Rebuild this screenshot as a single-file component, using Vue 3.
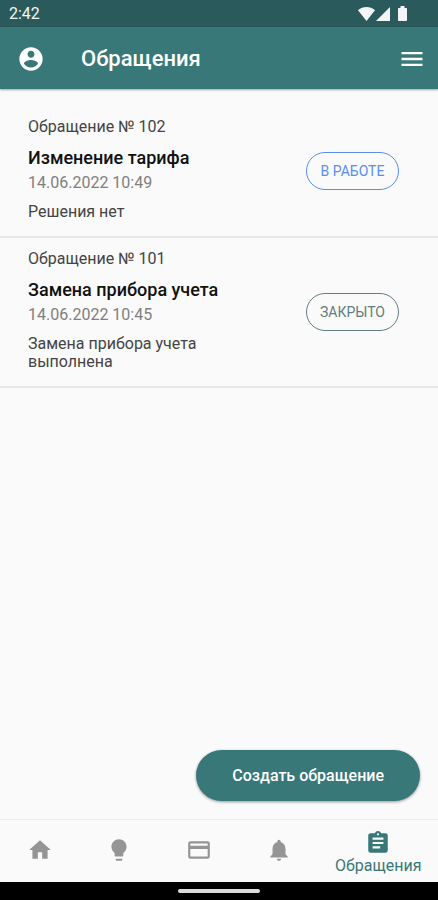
<script setup>
const tickets = [
  { id: 102, title: 'Изменение тарифа', date: '14.06.2022 10:49', result: 'Решения нет', status: 'В РАБОТЕ', kind: 'active' },
  { id: 101, title: 'Замена прибора учета', date: '14.06.2022 10:45', result: 'Замена прибора учета выполнена', status: 'ЗАКРЫТО', kind: 'closed' },
]

const tabs = [
  { name: 'Главная', path: 'M10 20v-6h4v6h5v-8h3L12 3 2 12h3v8z' },
  { name: 'Показания', path: 'M9 21c0 .55.45 1 1 1h4c.55 0 1-.45 1-1v-1H9v1zm3-19C8.14 2 5 5.14 5 9c0 2.38 1.19 4.47 3 5.74V17c0 .55.45 1 1 1h6c.55 0 1-.45 1-1v-2.26c1.81-1.27 3-3.36 3-5.74 0-3.86-3.14-7-7-7z' },
  { name: 'Оплата', path: 'M20 4H4c-1.11 0-1.99.89-1.99 2L2 18c0 1.11.89 2 2 2h16c1.11 0 2-.89 2-2V6c0-1.11-.89-2-2-2zm0 14H4v-7h16v7zm0-10H4V6h16v2z' },
  { name: 'Уведомления', path: 'M12 22c1.1 0 2-.9 2-2h-4c0 1.1.89 2 2 2zm6-6v-5c0-3.07-1.64-5.64-4.5-6.32V4c0-.83-.67-1.5-1.5-1.5s-1.5.67-1.5 1.5v.68C7.63 5.36 6 7.92 6 11v5l-2 2v1h16v-1l-2-2z' },
  { name: 'Обращения', active: true, path: 'M19 3h-4.18C14.4 1.84 13.3 1 12 1c-1.3 0-2.4.84-2.82 2H5c-1.1 0-2 .9-2 2v14c0 1.1.9 2 2 2h14c1.1 0 2-.9 2-2V5c0-1.1-.9-2-2-2zm-7 0c.55 0 1 .45 1 1s-.45 1-1 1-1-.45-1-1 .45-1 1-1zm2 14H7v-2h7v2zm3-4H7v-2h10v2zm0-4H7V7h10v2z' },
]
</script>

<template>
  <div class="screen">
    <div class="status-bar">
      <span>2:42</span>
      <svg class="status-icons" viewBox="0 0 52 16" aria-hidden="true">
        <path d="M0 4.2C5 0 12 0 17 4.2L8.500 15z" />
        <path d="M32 1v14H18z" />
        <path d="M42.500 0h4v2h1.500c.6 0 1 .4 1 1v11c0 .6-.4 1-1 1h-7c-.6 0-1-.4-1-1V3c0-.6.4-1 1-1h1.500z" />
      </svg>
    </div>

    <header class="app-bar">
      <button class="icon-button" type="button" aria-label="Профиль">
        <svg viewBox="0 0 24 24"><path d="M12 2C6.480 2 2 6.480 2 12s4.480 10 10 10 10-4.480 10-10S17.520 2 12 2zm0 3c1.660 0 3 1.340 3 3s-1.340 3-3 3-3-1.340-3-3 1.340-3 3-3zm0 14.200c-2.500 0-4.710-1.280-6-3.220.03-1.990 4-3.080 6-3.080 1.990 0 5.970 1.090 6 3.080-1.290 1.940-3.500 3.220-6 3.220z" /></svg>
      </button>
      <h1>Обращения</h1>
      <button class="icon-button" type="button" aria-label="Меню">
        <svg viewBox="0 0 24 24"><path d="M3 18h18v-2H3v2zm0-5h18v-2H3v2zm0-7v2h18V6H3z" /></svg>
      </button>
    </header>

    <main>
      <ul class="tickets">
        <li v-for="t in tickets" :key="t.id" class="ticket">
          <div class="details">
            <p class="number">Обращение № {{ t.id }}</p>
            <h2>{{ t.title }}</h2>
            <p class="date">{{ t.date }}</p>
            <p class="result">{{ t.result }}</p>
          </div>
          <span class="chip" :class="t.kind">{{ t.status }}</span>
        </li>
      </ul>
      <button class="create" type="button">Создать обращение</button>
    </main>

    <nav class="tabs">
      <a v-for="tab in tabs" :key="tab.name" href="#" class="tab" :class="{ active: tab.active }" :aria-label="tab.name">
        <svg viewBox="0 0 24 24"><path :d="tab.path" /></svg>
        <span v-if="tab.active">{{ tab.name }}</span>
      </a>
    </nav>
    <div class="system-bar"><div class="handle"></div></div>
  </div>
</template>

<style>
body {
  margin: 0;
  background: #fafafa;
}
</style>

<style scoped>
.screen {
  display: flex;
  flex-direction: column;
  min-height: 100vh;
  background: #fafafa;
  font-family: Roboto, "Liberation Sans", sans-serif;
  color: #444;
}
svg {
  display: block;
  fill: currentColor;
}
h1, h2, p, ul {
  margin: 0;
  padding: 0;
}
button {
  border: 0;
  font-family: inherit;
  cursor: pointer;
}
.status-bar {
  display: flex;
  align-items: center;
  justify-content: space-between;
  height: 27px;
  padding: 0 28px 0 9px;
  background: #2a5a5b;
  color: #f2f6f6;
  font-size: 16px;
}
.status-icons {
  width: 52px;
  height: 16px;
}
.app-bar {
  position: relative;
  box-sizing: border-box;
  display: flex;
  align-items: center;
  height: 62px;
  padding: 2px 12px 0 17px;
  background: #387879;
  color: #fff;
  box-shadow: 0 1px 2px rgba(0, 0, 0, 0.35);
}
.app-bar h1 {
  flex: 1;
  padding-left: 36px;
  font-size: 22px;
  font-weight: 500;
  line-height: 28px;
}
.icon-button {
  padding: 0;
  background: none;
  color: inherit;
}
.icon-button svg {
  width: 28px;
  height: 28px;
}
main {
  flex: 1;
  display: flex;
  flex-direction: column;
  justify-content: space-between;
  padding: 17px 0 18px;
}
.tickets {
  list-style: none;
}
.ticket {
  display: flex;
  align-items: center;
  justify-content: space-between;
  padding: 10px 39px 15px 28px;
  border-bottom: 2px solid #e6e6e6;
}
.details {
  width: 200px;
}
.number {
  font-size: 16px;
  line-height: 22px;
}
.ticket h2 {
  margin-top: 8px;
  color: #111;
  font-size: 18px;
  font-weight: 500;
  line-height: 24px;
}
.date {
  color: #808080;
  font-size: 16px;
  line-height: 26px;
}
.result {
  margin-top: 7px;
  font-size: 16px;
  line-height: 18px;
}
.chip {
  box-sizing: border-box;
  width: 93px;
  margin-top: 4px;
  border: 1px solid currentColor;
  border-radius: 19px;
  font-size: 14px;
  line-height: 36px;
  text-align: center;
}
.chip.active {
  color: #5b8def;
}
.chip.closed {
  color: #607d80;
}
.create {
  align-self: flex-end;
  height: 51px;
  margin-right: 18px;
  padding: 0 36px;
  border-radius: 26px;
  background: #387879;
  color: #fff;
  font-size: 16px;
  font-weight: 500;
  box-shadow: 0 1px 3px rgba(0, 0, 0, 0.4);
}
.tabs {
  display: flex;
  height: 62px;
  border-top: 1px solid #eee;
}
.tab {
  flex: 2;
  display: flex;
  flex-direction: column;
  align-items: center;
  justify-content: center;
  padding-bottom: 2px;
  color: #959595;
  font-size: 16px;
  line-height: 20px;
  text-decoration: none;
}
.tab.active {
  flex: 3;
  padding: 3px 0 0;
  color: #387879;
}
.tab svg {
  width: 26px;
  height: 26px;
}
.system-bar {
  display: flex;
  align-items: center;
  justify-content: center;
  height: 18px;
  background: #000;
}
.handle {
  width: 82px;
  height: 4px;
  border-radius: 2px;
  background: #dcdcdc;
}
</style>
